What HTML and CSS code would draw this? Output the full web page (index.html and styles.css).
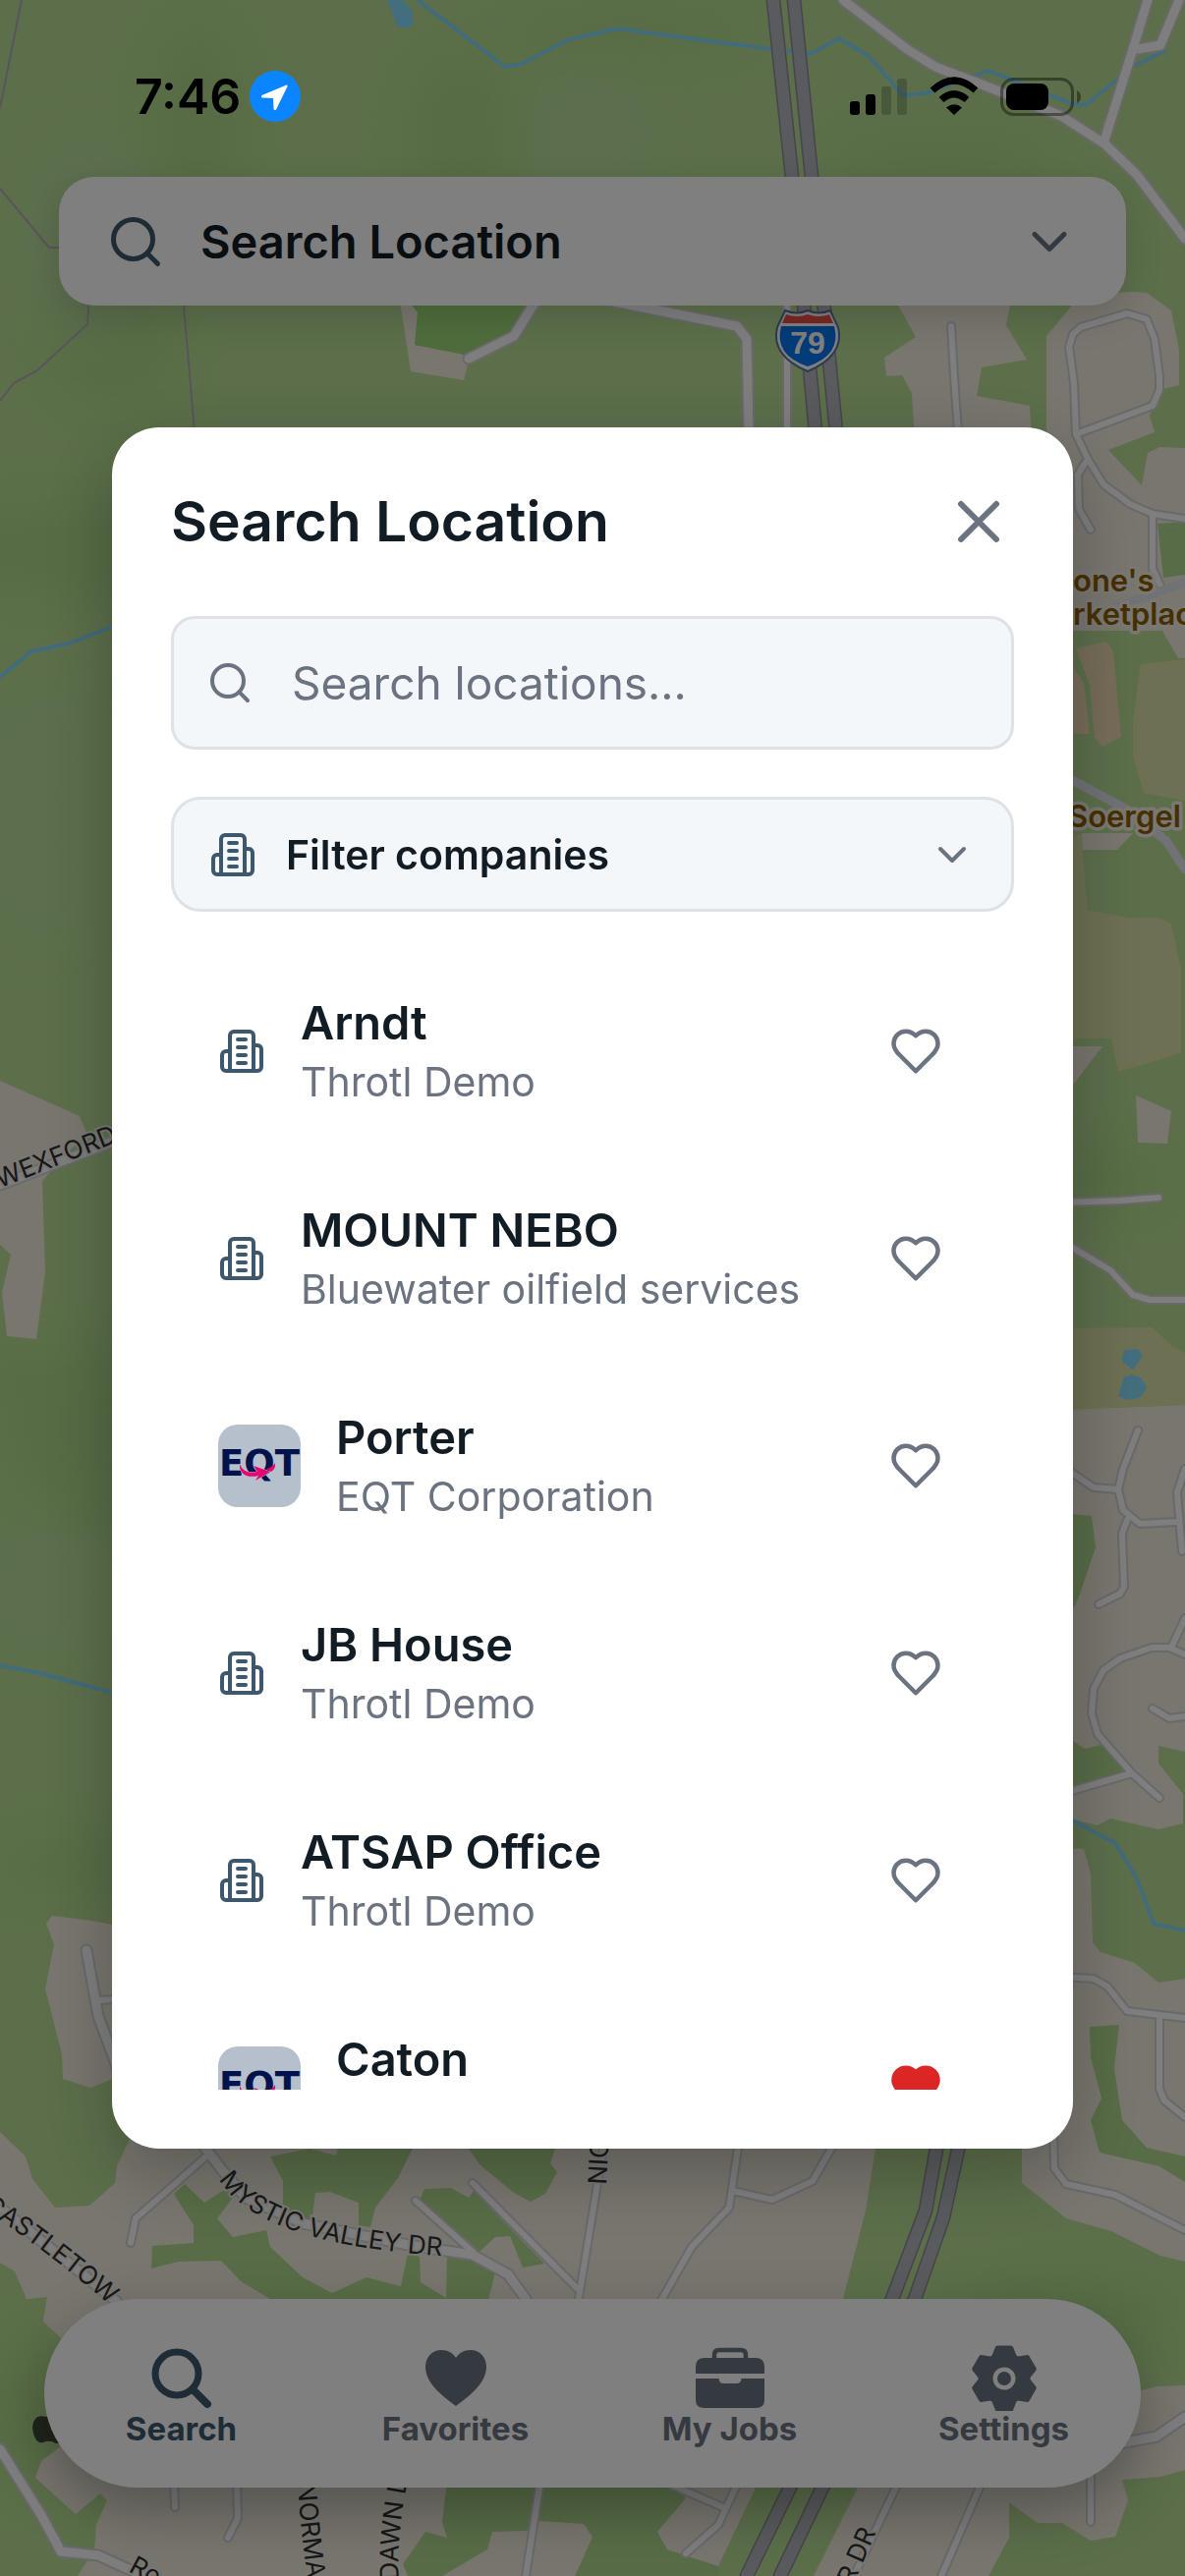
FILE: index.html
```html
<!DOCTYPE html>
<html lang="en">
<head>
  <meta charset="utf-8">
  <meta name="viewport" content="width=device-width, initial-scale=1">
  <title>Search Location</title>
  <link rel="stylesheet" href="styles.css">
</head>
<body>
  <!-- shared icons -->
  <svg class="sprite" aria-hidden="true">
    <symbol id="i-search" viewBox="0 0 24 24"><circle cx="11" cy="11" r="8"/><path d="m21 21-4.3-4.3"/></symbol>
    <symbol id="i-chevron" viewBox="0 0 24 24"><path d="m6 9 6 6 6-6"/></symbol>
    <symbol id="i-close" viewBox="0 0 24 24"><path d="M18 6 6 18M6 6l12 12"/></symbol>
    <symbol id="i-building" viewBox="0 0 24 24"><path d="M6 22V4a2 2 0 0 1 2-2h8a2 2 0 0 1 2 2v18ZM6 12H4a2 2 0 0 0-2 2v6a2 2 0 0 0 2 2h2M18 9h2a2 2 0 0 1 2 2v9a2 2 0 0 1-2 2h-2M10 6h4M10 10h4M10 14h4M10 18h4"/></symbol>
    <symbol id="i-heart" viewBox="0 0 24 24"><path d="M19 14c1.49-1.46 3-3.21 3-5.5A5.5 5.5 0 0 0 16.5 3c-1.76 0-3 .5-4.5 2-1.5-1.5-2.74-2-4.5-2A5.5 5.5 0 0 0 2 8.5c0 2.3 1.5 4.05 3 5.5l7 7Z"/></symbol>
    <symbol id="i-eqt" viewBox="0 0 84 84">
      <rect width="84" height="84" fill="#b6c0cd"/>
      <text class="eqt-text" x="42" y="52" text-anchor="middle">EQT</text>
      <path d="M22 40C25 48 32 50 40 48L36 42 53 48 38 57 41 52C29 55 21 50 22 40Z" fill="#e9056f" stroke="#b6c0cd" stroke-width="1" paint-order="stroke"/>
      <path d="M58 39Q59 45 54 48L49 45Q55 44 58 39Z" fill="#e9056f"/>
    </symbol>
  </svg>

  <div class="screen">
    <!-- map -->
    <svg class="map" viewBox="0 0 1206 2622" preserveAspectRatio="xMidYMid slice" aria-hidden="true">
      <defs>
        <filter id="soft" x="-50%" y="-50%" width="200%" height="200%"><feGaussianBlur stdDeviation="24"/></filter>
        <path id="p-wexford" d="M0 1209Q50 1190 130 1158"/>
        <path id="p-mystic" d="M223 2218Q262 2286 464 2297"/>
        <path id="p-castle" d="M-18 2248Q55 2296 118 2352"/>
        <path id="p-nic" d="M617 2224L624 2100"/>
        <path id="p-norman" d="M303 2528Q306 2580 318 2660"/>
        <path id="p-dawn" d="M406 2626Q402 2575 424 2480"/>
        <path id="p-dr" d="M868 2632L908 2540"/>
      </defs>
      <rect width="1206" height="2622" fill="#b8de94"/>
      <g fill="#a0d07e" opacity=".4" filter="url(#soft)">
        <ellipse cx="200" cy="130" rx="50" ry="110"/>
        <ellipse cx="470" cy="140" rx="60" ry="90"/>
        <ellipse cx="640" cy="30" rx="130" ry="25"/>
        <ellipse cx="960" cy="160" rx="120" ry="30"/>
        <ellipse cx="60" cy="560" rx="110" ry="50"/>
        <ellipse cx="120" cy="360" rx="70" ry="60"/>
        <ellipse cx="90" cy="1460" rx="90" ry="90"/>
        <ellipse cx="30" cy="1400" rx="70" ry="30"/>
        <ellipse cx="80" cy="1900" rx="90" ry="30"/>
        <ellipse cx="1130" cy="1200" rx="60" ry="30"/>
        <ellipse cx="1100" cy="2350" rx="110" ry="40"/>
        <ellipse cx="20" cy="2460" rx="40" ry="80"/>
      </g>
      <g fill="#bcdca4" opacity=".6" filter="url(#soft)">
        <ellipse cx="90" cy="240" rx="60" ry="100"/>
        <ellipse cx="600" cy="140" rx="60" ry="60"/>
        <ellipse cx="40" cy="830" rx="60" ry="120"/>
        <ellipse cx="40" cy="1620" rx="50" ry="60"/>
      </g>

      <!-- built up areas -->
      <g fill="#f2ecde">
        <path d="M408 300V312L418 378 472 387 478 362 422 351 425 318 415 300Z"/>
        <path d="M908 300L932 343 900 364 902 383 918 382 928 400 931 450H1050L1048 413 994 403 999 374 1045 366 1024 331 1030 300Z"/>
        <path d="M1100 300L1065 342V450L1092 642H1183L1199 670H1206V456L1180 455 1168 461 1162 494 1128 458 1175 440 1170 423 1184 396 1200 392V356L1192 316 1167 298 1152 297Z"/>
        <path d="M1101 848V865H1137L1153 848ZM1080 1065H1122L1080 1120ZM1156 1115L1192 1131 1188 1164 1158 1163Z"/>
        <path d="M1080 1435L1206 1430V1783L1179 1777V1795L1204 1826V1856L1179 1862 1130 1851 1117 1858 1080 1849Z"/>
        <path d="M1040 1878L1103 1882 1110 1907 1112 1977 1120 1987 1155 1998 1179 2018 1206 2014V2302L1181 2296 1131 2271 1085 2258 1040 2222Z"/>
        <path d="M0 1100L81 1136 88 1153 43 1202 46 1295 37 1363 7 1360 2 1315 11 1277 0 1267Z"/>
        <path d="M47 1958L53 1950 93 1955 130 1962V2110L92 2125 64 2116 63 2091 46 2024 55 1979Z"/>
        <path d="M0 2170L26 2195 33 2218 56 2247 91 2245 117 2222 119 2205 140 2160 892 2180 881 2250 858 2340 769 2532 731 2612V2622H79L96 2595 98 2570 109 2545 102 2538 77 2559 36 2522 42 2505 62 2490V2380L44 2363 48 2338 27 2340 15 2312 0 2303Z"/>
        <path d="M873 2532L828 2622H1006L1027 2583V2547L1056 2568H1081L1110 2586 1135 2582 1148 2545 1142 2524 1181 2521 1206 2514V2428L1177 2429 1100 2450 1000 2500Z"/>
      </g>
      <g fill="#b0da8e">
        <path d="M1178 533L1206 531V585L1184 588Z"/>
        <path d="M1080 1540L1111 1543 1115 1575 1097 1628 1080 1660ZM1080 1764L1104 1780 1120 1776 1152 1805 1080 1825Z"/>
        <path d="M1109 2063L1139 2061 1134 2105 1142 2158 1167 2186 1206 2195V2221L1180 2205 1119 2191 1110 2158 1121 2136 1110 2094Z"/>
        <path d="M275 2195L315 2187 342 2194 346 2180H423L405 2217 382 2247 377 2267 365 2265V2242L336 2231 321 2232 317 2263 288 2257V2220Z"/>
        <path d="M477 2187H565L560 2202 567 2211 555 2233 540 2241 523 2232 488 2203Z"/>
        <path d="M177 2233L188 2223 208 2242 231 2227 237 2237 221 2258 237 2277 271 2270 275 2287 308 2318 338 2334 373 2318 408 2327 415 2293 427 2297 428 2323 454 2339 455 2295H482L504 2313 496 2345H283L245 2322 225 2301 181 2302 154 2309 155 2286 197 2283V2265Z"/>
        <path d="M427 2240L432 2228 459 2227 477 2237 482 2230 554 2304 532 2308 519 2276 504 2277 488 2292Z"/>
        <path d="M455 2525L450 2567 455 2583 433 2577 410 2610 415 2622H450L496 2595 501 2577 536 2576 550 2566 594 2569 603 2582 585 2622H731V2612L679 2595 669 2577 698 2543 685 2525Z"/>
        <path d="M425 318L410 300H545L520 345 478 362 422 351Z" fill="#9eda78"/>
      </g>
      <g fill="#f4d8b6" opacity=".9">
        <path d="M1095 660L1126 653 1133 663 1141 750 1122 760 1114 751 1109 697ZM1080 662L1103 695 1109 747H1080Z"/>
      </g>
      <g fill="#dae0a4">
        <path d="M1161 676L1206 671V815L1164 807 1153 770V732Z"/>
        <path d="M1080 847L1101 850 1106 926 1147 934H1180L1192 940 1202 987V1072L1138 1091 1131 1057H1080Z"/>
        <path d="M1080 1352L1172 1351 1193 1370 1206 1377V1430L1080 1435Z"/>
      </g>

      <!-- water -->
      <g fill="#84dcfc">
        <path d="M394 0H410L419 10 421 26 412 29 404 26Z"/>
        <path d="M1144 1374L1158 1373 1163 1380 1153 1394 1142 1386ZM1152 1399L1162 1403 1167 1413 1160 1423 1147 1425 1138 1421 1144 1402Z"/>
      </g>
      <g class="stream">
        <path d="M425 0L514 68 531 65 577 41 627 29 723 42 825 55 854 39 885 58 919 97 942 95 1006 72 1092 106 1105 107 1154 67 1185 52"/>
        <path d="M0 689L32 663 70 655 130 632M0 1695L40 1703 130 1727M1080 1847L1135 1876 1157 1912 1174 1958 1206 1965"/>
      </g>
      <path class="boundary" d="M22 0L0 110M0 192L50 252H62M91 300L89 330 38 377 14 390 0 408M186 300L198 440"/>

      <!-- local roads: casing first, then fill -->
      <defs>
        <g id="roads-wide">
          <path d="M858 0L923 50 952 68 1017 93 1080 118 1125 147 1157 178 1206 243"/>
          <path d="M615 305L750 332 760 345 762 440M546 305L523 342 477 365"/>
          <path d="M1168 0L1153 50 1124 143M1158 50L1181 46 1200 0"/>
          <path d="M0 1206L120 1160M88 1985L100 2052 125 2120"/>
          <path d="M204 2180L227 2210 250 2237 308 2263 415 2285 481 2295 517 2315 535 2340M0 2247L119 2343"/>
          <path d="M0 2493L42 2560 62 2597 100 2601 146 2622M1206 2460L1177 2480 1140 2487"/>
        </g>
        <g id="roads-thin">
          <path d="M801 305V440M968 332L971 383 975 440"/>
          <path d="M1095 442L1093 390 1088 353 1092 340 1100 333 1147 319 1167 325 1175 345 1180 383V397L1173 413 1095 442 1107 467 1123 493 1150 513 1173 523 1206 528M1107 467L1097 483 1098 518 1110 539M1173 525V579L1182 598"/>
          <path d="M1080 1224L1140 1222 1179 1219M1080 1263L1130 1293 1153 1318 1170 1323H1206"/>
          <path d="M1080 1492L1113 1514 1138 1516 1143 1537 1160 1551 1198 1549M1158 1456L1143 1495 1138 1516M1147 1547L1142 1561 1144 1615 1140 1622 1118 1633M1206 1495L1198 1519 1203 1579M1206 1647L1192 1677"/>
          <path d="M1206 1684L1190 1677H1172L1140 1688 1123 1700 1113 1719 1111 1744 1117 1765 1152 1805 1180 1830M1080 1826L1152 1805M1173 1739L1190 1749 1206 1747"/>
          <path d="M1080 2012L1113 2014 1127 2022 1147 2047 1206 2054M1180 2052V2126L1185 2138 1206 2155M1072 2170L1073 2207 1085 2223 1135 2234 1206 2270"/>
          <path d="M102 2036L130 2034M212 2193L138 2258 133 2283M423 2240L481 2292M481 2222L588 2330M615 2180L588 2345M752 2180L742 2247 704 2287 671 2345M746 2230L786 2239 827 2220 850 2180"/>
          <path d="M177 2525L178 2552M241 2525L242 2563 232 2583M550 2525L535 2622M685 2530L738 2553M752 2525L731 2570 698 2599M915 2525L869 2622M1000 2525L958 2622M1110 2515V2567"/>
        </g>
      </defs>
      <use href="#roads-wide" class="casing wide"/>
      <use href="#roads-thin" class="casing thin"/>
      <use href="#roads-wide" class="road wide"/>
      <use href="#roads-thin" class="road thin"/>
      <path class="road arterial" d="M1080 639L1183 601 1206 593M1080 788L1147 824 1187 856 1206 885"/>

      <!-- interstate 79 -->
      <g class="highway-edge"><path id="i79" d="M787 0L806 180 831 450M808 0L826 180 852 450M956 2170L942 2250 908 2340 804 2532 760 2622M979 2170L960 2257 931 2340 837 2532 794 2622"/></g>
      <use href="#i79" class="highway"/>
      <path d="M799 316Q811 321 822 316 833 321 845 316L853 333Q860 362 822 378 784 362 791 333Z" fill="#fff" stroke="#5c74a4" stroke-width="2"/>
      <path d="M800 320Q811 324 822 320 833 324 844 320L848 329H796Z" fill="#f05048"/>
      <path d="M795 332H849Q857 361 822 373 787 361 795 332Z" fill="#0678f0"/>
      <text class="shield-text" x="822" y="360" text-anchor="middle">79</text>

      <g class="street">
        <text><textPath href="#p-wexford">WEXFORD</textPath></text>
        <text><textPath href="#p-mystic">MYSTIC VALLEY DR</textPath></text>
        <text><textPath href="#p-castle">CASTLETOW</textPath></text>
        <text><textPath href="#p-nic">NIC</textPath></text>
        <text><textPath href="#p-norman">NORMAN</textPath></text>
        <text><textPath href="#p-dawn">DAWN D</textPath></text>
        <text><textPath href="#p-dr">R DR</textPath></text>
        <text x="130" y="2617" transform="rotate(28 130 2617)">Ro</text>
      </g>
      <g class="place">
        <text x="1092" y="602">one's</text>
        <text x="1092" y="636">rketplace</text>
        <text x="1087" y="842">Soergel</text>
      </g>
      <path d="M47 2460Q34 2456 33 2471 35 2488 44 2486 50 2483 57 2487H70V2460Z" fill="#404a34"/>
    </svg>

    <header class="status-bar">
      <div class="status-left">
        <span class="time">7:46</span>
        <svg class="location" viewBox="0 0 52 52" aria-label="Location in use"><circle cx="26" cy="26" r="26" fill="#0a84ff"/><path d="M37.500 14.500L12.500 25Q11 27 13 27.500L24 28 24.500 39Q25.500 41 27 39.500L38.500 16Q39 14 37.500 14.500Z" fill="#fff"/></svg>
      </div>
      <svg class="status-icons" viewBox="0 0 236 40" aria-label="Signal, Wi-Fi and battery">
        <rect x="0" y="25" width="10" height="14" rx="3"/>
        <rect x="16" y="18" width="10" height="21" rx="3"/>
        <rect x="32" y="10" width="10" height="29" rx="3" opacity=".2"/>
        <rect x="48" y="2" width="10" height="37" rx="3" opacity=".2"/>
        <path d="M84 14Q106 -6 128 14M93 23.500Q106 12 119 23.500" fill="none" stroke="#000" stroke-width="7"/>
        <path d="M98 31.500Q106 25 114 31.500L106 39Z"/>
        <rect x="154.500" y="2.500" width="72" height="36" rx="12" fill="none" stroke="#000" stroke-width="3" opacity=".4"/>
        <rect x="159" y="7" width="43" height="27" rx="8"/>
        <path d="M231 14q4 2 4 6.500t-4 6.500z" opacity=".4"/>
      </svg>
    </header>

    <button class="search-bar" type="button">
      <svg class="icon icon-lg primary"><use href="#i-search"/></svg>
      <span class="search-bar-label">Search Location</span>
      <svg class="icon icon-lg"><use href="#i-chevron"/></svg>
    </button>

    <nav class="tab-bar">
      <a class="tab active" href="#search">
        <svg class="tab-icon" viewBox="0 0 72 72"><circle cx="31" cy="34" r="22" fill="none" stroke="currentColor" stroke-width="7"/><path d="M47 50L62 65" stroke="currentColor" stroke-width="8" stroke-linecap="round"/></svg>
        Search
      </a>
      <a class="tab" href="#favorites">
        <svg class="tab-icon" viewBox="0 0 72 72"><path d="M36 67C20 55 5 43 5 27 5 17 12 10 21 10 28 10 33 13 36 18 39 13 44 10 51 10 60 10 67 17 67 27 67 43 52 55 36 67Z"/></svg>
        Favorites
      </a>
      <a class="tab" href="#jobs">
        <svg class="tab-icon" viewBox="0 0 72 72"><path d="M1 34V27Q1 18 10 18H62Q71 18 71 27V34ZM1 39H24.500Q25 44 29 44H43Q47 44 47.500 39H71V61Q71 69 62 69H10Q1 69 1 61Z"/><path d="M20 20V15Q20 10 25 10H47Q52 10 52 15V20" fill="none" stroke="currentColor" stroke-width="4.500"/></svg>
        My Jobs
      </a>
      <a class="tab" href="#settings">
        <svg class="tab-icon" viewBox="0 0 72 72">
          <g transform="translate(36 39)">
            <circle r="19" fill="none" stroke="currentColor" stroke-width="15"/>
            <g id="teeth"><path id="tooth" d="M-13 -22L-9.500 -31Q-9 -33.500 -7 -33.500H7Q9 -33.500 9.500 -31L13 -22Z"/><use href="#tooth" transform="rotate(120)"/><use href="#tooth" transform="rotate(240)"/></g>
            <use href="#teeth" transform="rotate(180)"/>
            <circle r="7"/>
          </g>
        </svg>
        Settings
      </a>
    </nav>
  </div>

  <!-- location picker -->
  <div class="backdrop">
    <section class="modal" role="dialog" aria-modal="true" aria-labelledby="modal-title">
      <div class="modal-header">
        <h1 id="modal-title">Search Location</h1>
        <button class="icon-button" type="button" aria-label="Close"><svg class="icon icon-xl"><use href="#i-close"/></svg></button>
      </div>

      <label class="field">
        <svg class="icon icon-sm"><use href="#i-search"/></svg>
        <input type="search" placeholder="Search locations..." aria-label="Search locations">
      </label>

      <label class="filter">
        <svg class="icon icon-sm primary"><use href="#i-building"/></svg>
        <select aria-label="Filter companies">
          <option>Filter companies</option>
        </select>
        <svg class="icon icon-sm"><use href="#i-chevron"/></svg>
      </label>

      <ul class="locations">
        <li class="location-row">
          <svg class="icon icon-sm primary"><use href="#i-building"/></svg>
          <div class="location-text"><h2>Arndt</h2><p>Throtl Demo</p></div>
          <button class="icon-button" type="button" aria-label="Favorite Arndt"><svg class="icon icon-md"><use href="#i-heart"/></svg></button>
        </li>
        <li class="location-row">
          <svg class="icon icon-sm primary"><use href="#i-building"/></svg>
          <div class="location-text"><h2>MOUNT NEBO</h2><p>Bluewater oilfield services</p></div>
          <button class="icon-button" type="button" aria-label="Favorite MOUNT NEBO"><svg class="icon icon-md"><use href="#i-heart"/></svg></button>
        </li>
        <li class="location-row">
          <svg class="logo"><use href="#i-eqt"/></svg>
          <div class="location-text"><h2>Porter</h2><p>EQT Corporation</p></div>
          <button class="icon-button" type="button" aria-label="Favorite Porter"><svg class="icon icon-md"><use href="#i-heart"/></svg></button>
        </li>
        <li class="location-row">
          <svg class="icon icon-sm primary"><use href="#i-building"/></svg>
          <div class="location-text"><h2>JB House</h2><p>Throtl Demo</p></div>
          <button class="icon-button" type="button" aria-label="Favorite JB House"><svg class="icon icon-md"><use href="#i-heart"/></svg></button>
        </li>
        <li class="location-row">
          <svg class="icon icon-sm primary"><use href="#i-building"/></svg>
          <div class="location-text"><h2>ATSAP Office</h2><p>Throtl Demo</p></div>
          <button class="icon-button" type="button" aria-label="Favorite ATSAP Office"><svg class="icon icon-md"><use href="#i-heart"/></svg></button>
        </li>
        <li class="location-row">
          <svg class="logo"><use href="#i-eqt"/></svg>
          <div class="location-text"><h2>Caton</h2><p>EQT Corporation</p></div>
          <button class="icon-button favorite" type="button" aria-label="Remove Caton from favorites"><svg class="icon icon-md"><use href="#i-heart"/></svg></button>
        </li>
      </ul>
    </section>
  </div>
</body>
</html>
```
FILE: styles.css
```css
* {
  box-sizing: border-box;
}
body {
  margin: 0;
  font-family: Inter, "Liberation Sans", sans-serif;
  color: #111c24;
}
h1, h2, p, ul {
  margin: 0;
  padding: 0;
}
button, input, select {
  font: inherit;
  color: inherit;
  border: none;
  background: none;
  padding: 0;
}
button {
  cursor: pointer;
}
.sprite {
  position: absolute;
  width: 0;
  height: 0;
}
.screen {
  position: relative;
  display: flex;
  flex-direction: column;
  min-height: 100vh;
  padding-bottom: 90px;
  overflow: hidden;
}

/* map */
.map {
  position: absolute;
  inset: 0;
  width: 100%;
  height: 100%;
}
.stream, .boundary, .casing, .road, .highway, .highway-edge {
  fill: none;
  stroke-linecap: round;
  stroke-linejoin: round;
}
.stream {
  stroke: #84d6f8;
  stroke-width: 4;
}
.boundary {
  stroke: #b4a8b8;
  stroke-width: 2;
}
.casing {
  stroke: #d2d2d4;
}
.road {
  stroke: #fcfcff;
}
.casing.wide {
  stroke-width: 13;
}
.casing.thin {
  stroke-width: 10;
}
.road.wide {
  stroke-width: 9;
}
.road.thin {
  stroke-width: 6;
}
.road.arterial {
  stroke: #e0e4ec;
  stroke-width: 9;
}
.highway-edge {
  stroke: #8c8c94;
  stroke-width: 15;
}
.highway {
  stroke: #b4b6bc;
  stroke-width: 12;
}
.shield-text {
  font-family: "Liberation Sans", sans-serif;
  font-size: 32px;
  font-weight: 700;
  fill: #fff;
}
.street {
  font-size: 26px;
  font-weight: 400;
  fill: #30302c;
  stroke: #f0eee8;
  stroke-width: 4px;
  paint-order: stroke;
}
.place {
  font-size: 31px;
  font-weight: 600;
  fill: #8e6000;
  stroke: #f4f0e6;
  stroke-width: 7px;
  stroke-linejoin: round;
  paint-order: stroke;
}

/* status bar stays above the dimmed backdrop */
.status-bar {
  position: relative;
  z-index: 3;
  display: flex;
  align-items: center;
  justify-content: space-between;
  height: 180px;
  padding: 16px 105px 0 137px;
  color: #000;
}
.status-left {
  display: flex;
  align-items: center;
  gap: 9px;
}
.time {
  font-size: 50px;
  font-weight: 600;
}
.location {
  width: 52px;
  height: 52px;
}
.status-icons {
  width: 236px;
  height: 40px;
}

/* icons */
.icon {
  display: block;
  flex: none;
  fill: none;
  stroke: #6b7280;
  stroke-width: 2;
  stroke-linecap: round;
  stroke-linejoin: round;
}
.icon.primary {
  stroke: #3d586d;
}
.icon-sm {
  width: 48px;
  height: 48px;
}
.icon-md {
  width: 54px;
  height: 54px;
}
.icon-lg {
  width: 60px;
  height: 60px;
}
.icon-xl {
  width: 72px;
  height: 72px;
}
.icon-button {
  display: block;
  flex: none;
}
.favorite .icon {
  fill: #dc2626;
  stroke: #dc2626;
}

.search-bar {
  position: relative;
  display: flex;
  align-items: center;
  gap: 36px;
  height: 131px;
  margin: 0 60px;
  padding: 0 48px;
  border-radius: 36px;
  background: #fff;
  box-shadow: 0 12px 36px rgba(0, 0, 0, 0.15);
}
.search-bar-label {
  flex: 1;
  text-align: left;
  font-size: 47px;
  font-weight: 600;
}

/* bottom tabs */
.tab-bar {
  position: relative;
  display: grid;
  grid-template-columns: repeat(4, 1fr);
  margin: auto 45px 0;
  padding: 42px 0;
  border-radius: 96px;
  background: #fff;
  box-shadow: 0 24px 60px rgba(0, 0, 0, 0.3);
}
.tab {
  display: flex;
  flex-direction: column;
  align-items: center;
  font-size: 33px;
  font-weight: 700;
  line-height: 36px;
  color: #6b7280;
  text-decoration: none;
}
.tab.active {
  color: #3d586d;
}
.tab-icon {
  width: 72px;
  height: 72px;
  fill: currentColor;
}

/* modal */
.backdrop {
  position: fixed;
  inset: 0;
  z-index: 2;
  display: flex;
  padding: 435px 114px;
  background: rgba(0, 0, 0, 0.5);
}
.modal {
  display: flex;
  flex: 1;
  flex-direction: column;
  min-width: 0;
  padding: 60px;
  border-radius: 48px;
  background: #fff;
  box-shadow: 0 24px 72px rgba(0, 0, 0, 0.25);
}
.modal-header {
  display: flex;
  align-items: center;
  justify-content: space-between;
  margin-bottom: 60px;
}
.modal-header h1 {
  font-size: 57px;
  font-weight: 600;
  line-height: 72px;
}
.field, .filter {
  display: flex;
  flex: none;
  align-items: center;
  border: 3px solid #dde2e9;
  background: #f3f7fa;
}
.field {
  gap: 39px;
  height: 136px;
  margin-bottom: 48px;
  padding: 0 33px;
  border-radius: 24px;
}
.field input {
  flex: 1;
  min-width: 0;
  font-size: 46px;
  outline: none;
}
.field input::placeholder {
  color: #6b7280;
  opacity: 1;
}
.filter {
  gap: 30px;
  height: 117px;
  margin-bottom: 36px;
  padding: 0 36px;
  border-radius: 30px;
}
.filter select {
  flex: 1;
  min-width: 0;
  appearance: none;
  font-size: 41px;
  font-weight: 600;
}

.locations {
  flex: 1;
  min-height: 0;
  overflow: hidden;
  list-style: none;
}
.location-row {
  display: flex;
  align-items: center;
  gap: 36px;
  padding: 47px 73px 47px 48px;
}
.location-text {
  flex: 1;
  min-width: 0;
}
.location-text h2 {
  font-size: 47px;
  font-weight: 600;
  line-height: 60px;
}
.location-text p {
  margin-top: 3px;
  font-size: 41px;
  line-height: 54px;
  color: #6b7280;
}
.logo {
  flex: none;
  width: 84px;
  height: 84px;
  border-radius: 20px;
}
.eqt-text {
  font-family: "DejaVu Sans", sans-serif;
  font-size: 37px;
  font-weight: 700;
  fill: #00134d;
}
```
